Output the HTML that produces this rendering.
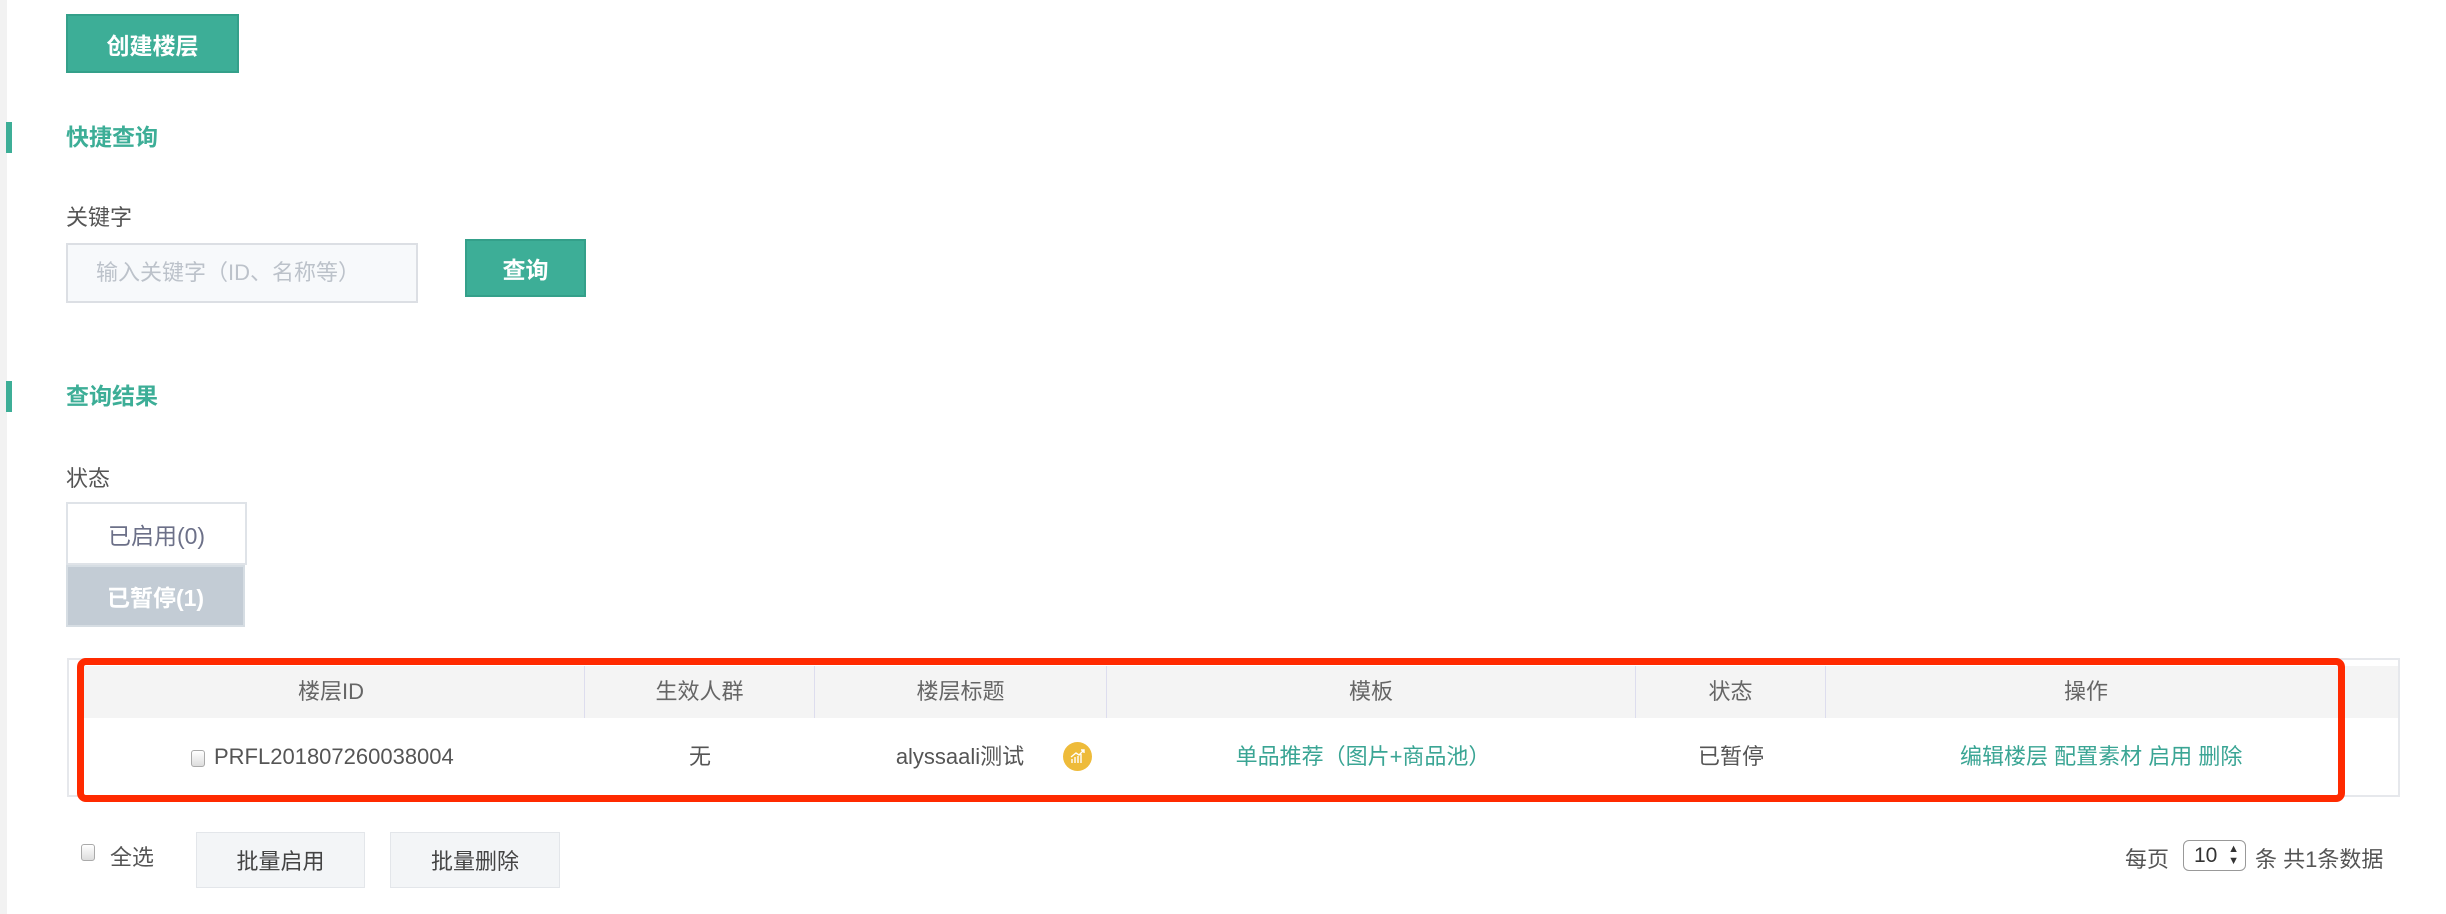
<!DOCTYPE html>
<html><head><meta charset="utf-8"><style>
*{margin:0;padding:0;box-sizing:border-box}
body{width:2446px;height:914px;background:#fff;position:relative;overflow:hidden;font-family:"Liberation Sans","Noto Sans CJK SC",sans-serif;color:#555}
.a{position:absolute}
.btn{position:absolute;background:#3dae97;border:2px solid #34a08a;color:#fff;font-size:23px;font-weight:bold;display:flex;align-items:center;justify-content:center}
.bar{position:absolute;left:6px;width:6px;height:31px;background:#3dae97}
.ttl{position:absolute;left:66px;font-size:23px;font-weight:bold;color:#3dae97;line-height:31px}
.lbl{position:absolute;left:66px;font-size:22px;color:#555;line-height:30px}
.th{position:absolute;top:666px;height:52px;line-height:52px;text-align:center;font-size:22px;color:#666;border-right:1px solid #dde}
.td{position:absolute;top:737px;line-height:40px;text-align:center;font-size:22px;color:#555}
.g{color:#3aa594}
.gb{position:absolute;background:#f3f5f7;border:1px solid #e3e6ea;font-size:22px;color:#444;display:flex;align-items:center;justify-content:center}
.cb{position:absolute;width:14px;height:17px;border:1px solid #aaa;border-radius:3px;background:linear-gradient(#fff,#ddd)}
</style></head><body>
<div class="a" style="left:0;top:0;width:7px;height:914px;background:#f2f2f2"></div>
<div class="btn" style="left:66px;top:14px;width:173px;height:59px">创建楼层</div>
<div class="bar" style="top:122px"></div><div class="ttl" style="top:122px">快捷查询</div>
<div class="lbl" style="top:203px">关键字</div>
<div class="a" style="left:66px;top:243px;width:352px;height:60px;background:#f7f9fb;border:2px solid #dcdfe4;font-size:22px;color:#bcc2ca;padding-left:28px;line-height:56px">输入关键字（ID、名称等）</div>
<div class="btn" style="left:465px;top:239px;width:121px;height:58px">查询</div>
<div class="bar" style="top:381px"></div><div class="ttl" style="top:381px">查询结果</div>
<div class="lbl" style="top:464px">状态</div>
<div class="a" style="left:66px;top:502px;width:181px;height:63px;border:2px solid #dfe3e8;background:#fff;font-size:23px;color:#6c7088;display:flex;align-items:center;justify-content:center">已启用(0)</div>
<div class="a" style="left:66px;top:565px;width:179px;height:62px;border:2px solid #d6dde3;background:#c3ccd5;font-size:23px;color:#fff;font-weight:bold;display:flex;align-items:center;justify-content:center">已暂停(1)</div>
<div class="a" style="left:67px;top:658px;width:2333px;height:139px;border:2px solid #e6e8ec"></div>
<div class="a" style="left:78px;top:666px;width:2320px;height:52px;background:#f4f4f4"></div>
<div class="th" style="left:78px;width:507px">楼层ID</div>
<div class="th" style="left:585px;width:230px">生效人群</div>
<div class="th" style="left:815px;width:292px">楼层标题</div>
<div class="th" style="left:1107px;width:529px">模板</div>
<div class="th" style="left:1636px;width:190px">状态</div>
<div class="th" style="left:1826px;width:520px;border-right:none">操作</div>
<div class="cb" style="left:191px;top:750px"></div>
<div class="td" style="left:214px;text-align:left">PRFL201807260038004</div>
<div class="td" style="left:600px;width:200px">无</div>
<div class="td" style="left:870px;width:180px">alyssaali测试</div>
<div class="a" style="left:1063px;top:742px;width:29px;height:29px;border-radius:50%;background:#eebb3a"><svg width="29" height="29" viewBox="0 0 29 29"><path d="M9 21v-4M12 21v-6M15 21v-7M18 21v-9M8 15l5-4 3 2 5-5M18 8h3v3" stroke="#fff" stroke-width="1.4" fill="none"/></svg></div>
<div class="td g" style="left:1150px;width:426px">单品推荐（图片+商品池）</div>
<div class="td" style="left:1636px;width:190px">已暂停</div>
<div class="td g" style="left:1826px;width:580px;text-align:left;padding-left:134px">编辑楼层 配置素材 启用 删除</div>
<div class="a" style="left:77px;top:658px;width:2268px;height:144px;border:7px solid #ff2a00;border-radius:9px"></div>
<div class="cb" style="left:81px;top:844px"></div>
<div class="a" style="left:110px;top:840px;font-size:22px;color:#555">全选</div>
<div class="gb" style="left:196px;top:832px;width:169px;height:56px">批量启用</div>
<div class="gb" style="left:390px;top:832px;width:170px;height:56px">批量删除</div>
<div class="a" style="left:2125px;top:842px;font-size:22px;color:#555">每页</div>
<div class="a" style="left:2183px;top:840px;width:63px;height:31px;border:1px solid #999;border-radius:6px;font-size:21px;color:#333;padding-left:10px;line-height:29px">10<span style="font-size:11px;position:absolute;right:6px;top:2px;line-height:12px">▲<br>▼</span></div>
<div class="a" style="left:2255px;top:842px;font-size:22px;color:#555">条 共1条数据</div>
</body></html>
